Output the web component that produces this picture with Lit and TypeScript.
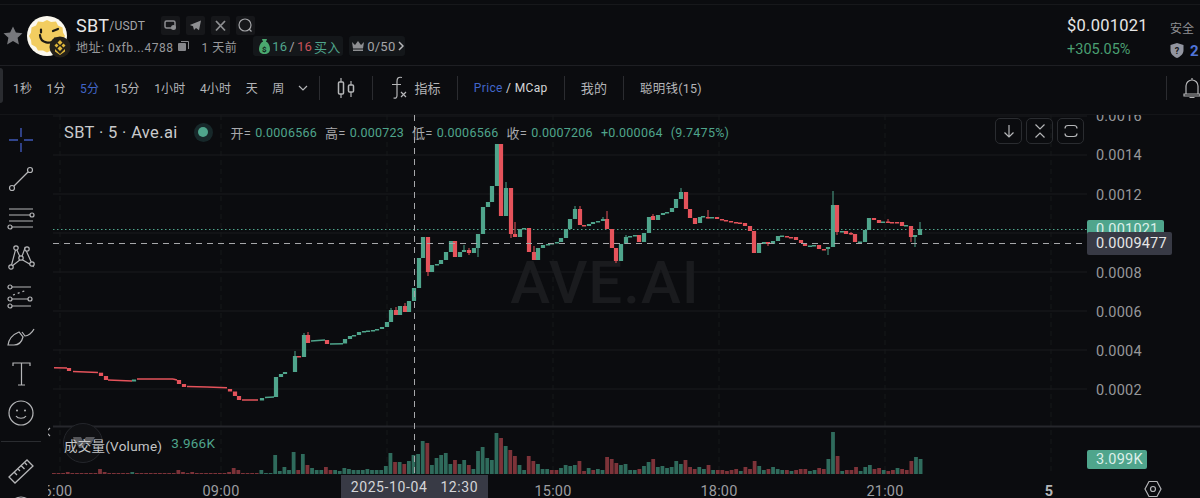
import { LitElement, html, css, svg } from "lit";
import { customElement } from "lit/decorators.js";

const G = "#4fa58c", R = "#e5535b", VG = "#2f6b5c", VR = "#7d3339";

// x, open-y, close-y, high-y?, low-y?
const candles: number[][] = [
  [69,368,371],[101,372.7,376],[106,376,380],[134,381.5,379.5],[179,380,384],[184,384,387],
  [230,389,391.5],[235,391.5,396],[239,396,400],[262,400.5,398],[276,397,377],[281,377,374],[285,374,372],
  [295,372,356,351],[299,356,357],[304,357,335,333],[308,335,343,332],[327,340,344],[345,343.5,339],[350,339,336],
  [354,336,335],[359,335,332],[364,332,331],[368,331,330.5],[373,330.5,330],[377,330,329],[382,329,327],[387,327,322],[391,322,310,308],[396,310,315,307],[400,315,306],[405,306,312,303],
  [409,312,301],[414,301,288],[419,288,258],[423,258,237],[428,237,272,237,276],[432,272,265],[437,265,264],[441,264,260],[446,260,252],[451,252,241],[455,241,257],[460,257,252],
  [464,252,250,245],[469,250,253,248,255],[474,253,248],[478,248,234,234,257],[483,234,207],[488,207,202],[492,202,186],[497,186,144],[501,144,216],[506,216,188,182],[511,188,234,188,238],
  [515,234,237,222],[520,237,229],[524,229,228],[529,228,252],[534,252,260,246],[538,260,248],[543,248,245],[548,245,244],[552,244,243],[557,243,242],[561,242,238],[566,238,229],[570,229,219],[575,219,209,206],[580,209,225,206],
  [584,225,226],[589,226,224],[593,224,222],[598,222,221],[603,221,219,217],[607,219,229,211],[612,229,248],[616,248,261,248,263],[621,261,244],[626,244,237,235],[630,237,236],[635,236,235],[639,235,242],[644,242,233],[649,233,217],[653,216,220,214],[658,220,215],
  [663,215,213],[667,213,212],[672,212,208],[676,208,199],[681,199,192,188],[686,192,209],[690,209,218],[695,218,224],[700,223,217],[703,217,216],[708,217,218,210],[712,217.5,217],[717,217,219],[722,219,220],[726,220,221],[731,221,222],[736,222,222.5],[740,222.5,223],[745,223,226],[750,226,231],[754,231,253],[759,253,244],
  [764,244,242],[768,242,244,242,246],[773,244,241],[778,241,236],[782,236,235.5],[787,236,237],[791,237,237.5],[796,237,240],[801,240,243],[805,243,246],[810,246,245.5],[814,245.5,245],[819,245,249],[824,249,249.5],[828,249,247,247,255],[833,247,205,191],[837,205,232,205,235],[842,232,231],[846,231,234],[851,233,234,232,235],[855,234,242],[860,242,241.5],[865,242,230],[869,230,218],[874,218,220],[879,220,223],[883,222,221.5],[888,221.5,222,219],[892,222,222.5],[897,222,222.2],[902,222,226],[906,226,225],[911,226,237,226,242],[915,237,235,235,247],[920,235,229,222],
];
// flat runs: x0,x1,y0,y1,color
const runs: [number, number, number, number, string][] = [
  [54,67,367.7,368,R],[73,98,371.5,372.5,R],[108,132,380,381,R],[137,173,379,379,R],[173,177,379,380,R],[187,207,386.5,387,R],
  [207,227,387,387.8,R],[242,258,400,400,R],[265,274,397.6,397,G],[311,325,341,340,G],[330,343,344,343.7,G],
];

const headVols: string[] = Array(48).fill("1r");
const setVols: [number, string][] = [[3,"2r"],[10,"5r"],[11,"2r"],[17,"2g"],[27,"4r"],[28,"2r"],[30,"2r"],[38,"2r"],[39,"6r"],[40,"4r"],[45,"4g"],[46,"1g"],[47,"1g"]];
setVols.forEach(([i, v]) => (headVols[i] = v));
const tailVols = `19g 3g 7g 4g 22g 4r 20g 9r 6g 4g 4g 7r 4r 4g 3g 6g 5g 4g 4g 4g 5g 4g 4g 4g 8g 21g 12r 12g 10r 13g 19g 20g 33g 31r 9g 16g 19g 21g 10g 14r 10g 14g 9r 5g 23g 27g 16g 14g 41g 36r 28g 24r 18r 9g 4g 18r 13r 10g 5g 5g 4r 4r 6g 9g 8g 9g 13r 3r 6g 4r 5g 4g 17r 15r 11r 9g 10g 4g 4g 5r 8g 12g 15r 7g 8g 6g 7g 13g 10g 14r 7r 5r 7g 5g 9r 4g 4r 4r 3r 4r 5r 3g 7r 5r 13r 8g 4g 5r 7g 5g 4g 4r 3g 4r 5r 5r 3g 4g 6r 5r 15g 42g 18r 3g 4r 4r 7r 3g 7g 9g 5r 6r 4g 3r 4r 6g 5r 4r 13r 17g 15g`.split(" ");
const vols: [number, string][] = [...headVols, ...tailVols].map((s) => [parseInt(s), s.endsWith("g") ? VG : VR] as [number, string]);

const prices: [string, number][] = [["0.0016",116],["0.0014",155],["0.0012",194.5],["0.0008",272.5],["0.0006",311.5],["0.0004",350.5],["0.0002",389.5]];
const grid = [116, 155, 194, 233, 272, 311, 350, 389];
const vgrid = [60, 221, 387, 553, 719, 885, 1051];
const times: [string, number][] = [["6:00",58],["09:00",221],["15:00",553],["18:00",719],["21:00",885]];

function chart() {
  return html`<svg class="plot" width="1152" height="383" viewBox="48 115 1152 383">
    ${grid.map((y) => svg`<line x1="53" x2="1087" y1=${y} y2=${y} stroke="#1a1b1e"/>`)}
    ${vgrid.map((x) => svg`<line x1=${x} x2=${x} y1="115" y2="475" stroke="#17181b" stroke-dasharray="5 4"/>`)}
    <text x="605" y="303" text-anchor="middle" class="wm">AVE.AI</text>
    <line x1="53" x2="1087" y1="229.5" y2="229.5" stroke="#4fa58c" stroke-dasharray="1.5 2.5"/>
    ${runs.map(([a, b, c, d, col]) => svg`<line x1=${a} x2=${b} y1=${c} y2=${d} stroke=${col} stroke-width="1.5"/>`)}
    ${candles.map(([x, o, c, hi, lo]) => {
      const col = c < o ? G : R;
      const top = Math.min(o, c), h = Math.max(Math.abs(o - c), 1.5);
      return svg`${hi !== undefined || lo !== undefined ? svg`<line x1=${x} x2=${x} y1=${hi ?? top} y2=${lo ?? top + h} stroke=${col}/>` : ""}<rect x=${x - 2.1} y=${top} width="4.2" height=${h} fill=${col}/>`;
    })}
    <line x1="53" x2="1087" y1="243.5" y2="243.5" stroke="#a6a7aa" stroke-dasharray="6 5"/>
    <line x1="53" x2="1200" y1="426.5" y2="426.5" stroke="#26272c" stroke-width="2"/>
    ${vols.map(([h, col], i) => svg`<rect x=${54 + i * 4.61 - 2} y=${474 - h} width="3.8" height=${h} fill=${col}/>`)}
    <line x1="414.5" x2="414.5" y1="115" y2="475" stroke="#a6a7aa" stroke-dasharray="6 5"/>
    <circle cx="83" cy="443" r="19.5" fill="#101114" stroke="#24262b"/>
    <path d="M73 437h8l2 4 3-4h9l-4 7h-6l-2 4h-4l-2-4h-2z" fill="#55565a"/>
    <text x="1096" y="120.5" class="ax">0.0016</text>
    ${prices.slice(1).map(([t, y]) => svg`<text x="1096" y=${y + 5} class="ax">${t}</text>`)}
    ${times.map(([t, x]) => svg`<text x=${x} y="496" text-anchor="middle" class="ax tm">${t}</text>`)}
    <text x="1049" y="496" text-anchor="middle" class="ax five">5</text>
    <g fill="none" stroke="#b5b6b8" stroke-width="1.2"><path d="M1149 481.500h8l4 7.500-4 7.500h-8l-4-7.500z"/><circle cx="1153" cy="489" r="2.500"/></g>
  </svg>`;
}

const ic = (w: number, h: number, body: unknown, cls = "") =>
  html`<svg class="ic ${cls}" width=${w} height=${h} viewBox="0 0 ${w} ${h}">${body}</svg>`;

@customElement("app-root")
export class AppRoot extends LitElement {
  static styles = css`
    :host { display: block; width: 1200px; height: 498px; overflow: hidden; background: #0b0c0f; color: #b5b6b8;
      font-family: "Roboto", "Noto Sans CJK SC", sans-serif; font-size: 12px; position: relative; }
    .ic { display: block; flex: none; fill: none; stroke: #b5b6b8; stroke-width: 1.2; }
    .solid { stroke: none; }
    .head { margin-top: 4px; height: 62px; box-sizing: border-box; border-top: 1px solid #17181b; border-bottom: 1px solid #1e1f23; display: flex; align-items: center; padding-left: 3px; }
    .star { margin-top: 2px; }
    .head-main { display: flex; flex-direction: column; gap: 1px; margin-left: 3px; padding-top: 1px; }
    .logo { margin-left: 4px; }
    .row1, .row2 { display: flex; align-items: center; white-space: nowrap; }
    .row1 { height: 20px; }
    .row2 { height: 20px; color: #98999c; letter-spacing: .5px; }
    .sym { font-size: 18px; color: #e6e6e6; letter-spacing: .3px; }
    .pair { font-size: 12px; color: #a4a5a8; letter-spacing: .2px; margin-top: 2px; }
    .links { display: flex; gap: 6px; margin-left: 16px; }
    .sq { width: 19px; height: 19px; background: #16171a; border-radius: 2px; display: flex; align-items: center; justify-content: center; }
    .copy { margin-left: 5px; }
    .age { margin-left: 12px; }
    .badge { height: 20px; background: #14171a; border-radius: 3px; display: flex; align-items: center; padding: 0 3px; gap: 2px; color: #a4a5a8; font-size: 13px; box-sizing: border-box; flex: none; letter-spacing: .25px; }
    .b1 { margin-left: 16px; width: 90px; padding-left: 6px; }
    .b2 { margin-left: 6px; width: 56px; padding-left: 2px; }
    .gr { color: #4fa58c; } .rd { color: #c9525a; }
    .head-right { margin-left: auto; display: flex; width: 133px; flex: none; padding-top: 2px; }
    .pr { width: 103px; display: flex; flex-direction: column; gap: 3px; }
    .pv { font-size: 16.5px; color: #e6e6e6; letter-spacing: .25px; line-height: 24px; }
    .pc { font-size: 14.5px; color: #4a9f72; line-height: 18px; }
    .safe { display: flex; flex-direction: column; gap: 7px; padding-top: 5px; color: #8f9093; overflow: hidden; }
    .safe-v { display: flex; align-items: center; gap: 6px; color: #4f74d8; font-size: 15px; font-weight: 700; line-height: 16px; }
    .bar { height: 49px; box-sizing: border-box; border-bottom: 1px solid #141518; display: flex; align-items: center; position: relative; padding-bottom: 5px; letter-spacing: .2px; color: #b4b5b8; }
    .grip { position: absolute; left: 0; top: 2px; width: 3px; height: 35px; background: #2a2c30; border-radius: 0 3px 3px 0; }
    .sep { width: 1px; height: 24px; background: #2b2c30; flex: none; }
    .tf { margin-left: 13px; display: flex; align-items: center; gap: 14.4px; }
    .on { color: #4166c9; }
    .mc { color: #d5d6d8; }
    .px { letter-spacing: .35px; }
    .lg { font-size: 13px; }
    .md { font-size: 12.5px; }
    .chev { margin-left: 14px; margin-right: 11px; }
    .m16 { margin: 0 16px; }
    .fx { margin: 0 5px 0 16px; }
    .bell { margin-left: auto; margin-right: -1px; display: flex; align-items: center; width: 34px; justify-content: flex-end; flex: none; }
    .bell .sep { margin-right: 16px; }
    .body { display: flex; height: 383px; }
    .tools { width: 48px; flex: none; display: flex; flex-direction: column; align-items: center; padding: 11px 6px 0 0; box-sizing: border-box; gap: 11px; }
    .tools .ic { width: 28px; height: 28px; }
    .tools .active { stroke: #3f58b8; stroke-width: 1.4; }
    .rule { width: 40px; height: 1px; background: #2a2c30; margin: 3px 0 4px; flex: none; }
    .chart { position: relative; flex: 1; overflow: hidden; }
    .plot { display: block; }
    .plot text { font-family: "Roboto", "Noto Sans CJK SC", sans-serif; }
    .ax { font-size: 14.5px; fill: #96979a; letter-spacing: .2px; }
    .tm { fill: #9c9da0; }
    .five { font-weight: 700; fill: #b5b6b8; }
    .wm { font-size: 60px; font-weight: 500; fill: #1a1b1e; letter-spacing: 1px; }
    .legend { position: absolute; left: 16px; top: 5px; height: 24px; display: flex; align-items: center; font-size: 12.5px; color: #a8a9ac; white-space: nowrap; letter-spacing: .25px; }
    .legend span.k { margin-right: 4px; font-size: 13px; }
    .title { font-size: 16.5px; color: #c9cacc; letter-spacing: .35px; margin-right: 16px; }
    .halo { width: 19px; height: 19px; border-radius: 50%; background: #17282a; display: flex; align-items: center; justify-content: center; margin-right: 18px; }
    .dot { width: 10px; height: 10px; border-radius: 50%; background: #4fa58c; }
    .legend b { font-weight: 400; color: #4fa58c; margin-right: 8px; }
    .btns { position: absolute; left: 947px; top: 3px; display: flex; gap: 4px; }
    .btn { width: 27px; height: 26px; box-sizing: border-box; border: 1px solid #2a2c30; border-radius: 5px; display: flex; align-items: center; justify-content: center; }
    .tag { position: absolute; box-sizing: border-box; color: #e6e6e6; font-size: 14.5px; border-radius: 2px; display: flex; align-items: center; padding-left: 9px; letter-spacing: .2px; }
    .t-price { left: 1039px; top: 105px; width: 77px; height: 18px; background: #4fa58c; color: #dcefe9; }
    .t-cross { left: 1039px; top: 117px; width: 85px; height: 23px; background: #383a45; }
    .t-vol { left: 1039px; top: 335px; width: 60px; height: 19px; background: #4fa58c; color: #dcefe9; }
    .t-time { left: 293px; top: 360px; width: 147px; height: 23px; background: #383a45; color: #d4d5d8; padding: 0; justify-content: center; gap: 13px; font-size: 14px; border-radius: 0; letter-spacing: .6px; }
    .vlab { position: absolute; left: 16px; top: 320px; display: flex; gap: 9px; font-size: 13.5px; color: #c4c5c8; letter-spacing: .25px; }
    .collapse { position: absolute; left: -3px; top: 312px; }
  `;

  render() {
    return html`
      <div class="head">
        <svg class="ic solid star" width="20" height="20" viewBox="0 0 20 20"><path fill="#77787c" d="M10 .5l2.900 6 6.600.8-4.900 4.500 1.300 6.600L10 15.100l-5.900 3.300 1.300-6.600L.5 7.300l6.600-.8z"/></svg>
        <svg class="ic solid logo" width="46" height="46" viewBox="0 -4 46 46">
          <circle cx="20" cy="20" r="20" fill="#fbf8ee"/>
          <path fill="#f2cd60" d="M20 4l4 2 5-.5 2 4 4.500 2 .5 5 2 3.500-2 4-.5 4.500-4.500 2.500-2 3.500-5 0-4 2-4-2-5 0-2-3.500-4.500-2.500-.5-4.500-2-4 2-3.500.5-5 4.500-2 2-4 5 .5z"/>
          <path d="M13 19a8 8 0 0 0 15 3.500" fill="none" stroke="#1c1a14" stroke-width="2.200" stroke-linecap="round"/>
          <path d="M14 13.500v3M26 15l5-2" fill="none" stroke="#1c1a14" stroke-width="2.200" stroke-linecap="round"/>
          <circle cx="33" cy="31" r="10.500" fill="#23201a"/>
          <path d="M33 24l2.500 2.500-2.500 2.500-2.500-2.500zM27.500 29.500l2-2 2 2-2 2zM38.500 29.500l-2-2-2 2 2 2zM33 30l2.500 2.500-2.500 2.500-2.500-2.500zM28 33l5 5 5-5v2.500l-5 3.500-5-3.500z" fill="#e2b93b"/>
        </svg>
        <div class="head-main">
          <div class="row1">
            <span class="sym">SBT</span><span class="pair">/USDT</span>
            <div class="links">
              <div class="sq">${ic(13, 13, svg`<rect x="1" y="2" width="10" height="7" rx="1.500" stroke="#8e8f92" stroke-width="1.500"/><circle cx="9.500" cy="8.500" r="2.500" fill="#8e8f92" stroke="none"/>`)}</div>
              <div class="sq">${ic(13, 13, svg`<path d="M12 1.500L.8 6l3.200 1.200 1 3.800 2-2 3 2.200z" fill="#8e8f92" stroke="none"/>`)}</div>
              <div class="sq">${ic(13, 13, svg`<path d="M2 2l9 9.500M11 2L2 11.500" stroke="#8e8f92" stroke-width="1.800"/>`)}</div>
              <div class="sq">${ic(15, 15, svg`<circle cx="7" cy="7" r="6" stroke="#a4a5a8"/><path d="M11 11l2.500 2.500" stroke="#a4a5a8"/>`)}</div>
            </div>
          </div>
          <div class="row2">
            <span>地址: 0xfb...4788</span>
            <svg class="ic solid copy" width="11" height="11" viewBox="0 0 11 11"><rect x="0" y="2" width="8" height="8" rx="1" fill="#85868a"/><path d="M3 0h7a1 1 0 0 1 1 1v7h-1V1H3z" fill="#85868a"/></svg>
            <span class="age">1 天前</span>
            <div class="badge b1">
              <svg class="ic solid" width="11" height="15" viewBox="0 0 11 15"><path d="M3 0h5L7 3h1c2 2 3 4.500 3 7 0 3-2 5-5.500 5S0 13 0 10c0-2.500 1-5 3-7h1z" fill="#4aa86f"/><text x="5.500" y="12.500" text-anchor="middle" font-size="8" font-weight="700" fill="#0d2018">$</text></svg>
              <span class="gr">16</span><span>/</span><span class="rd">16</span><span class="gr">买入</span>
            </div>
            <div class="badge b2">
              <svg class="ic solid" width="14" height="12" viewBox="0 0 14 12"><path d="M1 2l3 3 3-4 3 4 3-3-1 6.500H2zM2 9.500h10V11H2z" fill="#8e8f92"/></svg>
              <span>0/50</span>
              <svg class="ic" width="6" height="10" viewBox="0 0 6 10"><path d="M1 1l4 4-4 4" stroke-width="1.500"/></svg>
            </div>
          </div>
        </div>
        <div class="head-right">
          <div class="pr"><span class="pv">$0.001021</span><span class="pc">+305.05%</span></div>
          <div class="safe"><span>安全</span><div class="safe-v">
            <svg class="ic solid" width="14" height="15" viewBox="0 0 14 15"><path d="M7 0l6.500 2v5c0 4-3 6.500-6.500 8C3.500 13.500.5 11 .5 7V2z" fill="#9295a0"/><text x="7" y="10.500" text-anchor="middle" font-size="9" font-weight="700" fill="#15161a">?</text></svg><span>2</span></div></div>
        </div>
      </div>

      <div class="bar">
        <div class="grip"></div>
        <div class="tf">
          <span>1秒</span><span>1分</span><span class="on">5分</span><span>15分</span><span>1小时</span><span>4小时</span><span>天</span><span>周</span>
        </div>
        ${ic(10, 6, svg`<path d="M1 1l4 4 4-4"/>`, "chev")}
        <div class="sep"></div>
        ${ic(20, 22, svg`<path d="M5 1v20M15 4v16"/><rect x="2.500" y="5" width="5" height="12" rx="1" fill="#0b0c0f" stroke-width="1.500"/><rect x="12.500" y="8" width="5" height="7" rx="1" fill="#0b0c0f" stroke-width="1.500"/>`, "m16")}
        <div class="sep"></div>
        ${ic(20, 24, svg`<path d="M13 1.500c-4-1-5 1-5 4v14c0 2-1 3-3.500 2.500M3 8.500h9"/><path d="M12 16l5 5M17 16l-5 5"/>`, "fx")}
        <span class="lg">指标</span>
        <div class="sep m16"></div>
        <span class="on px">Price</span><span class="mc px">&nbsp;/&nbsp;MCap</span>
        <div class="sep m16"></div>
        <span class="lg">我的</span>
        <div class="sep m16"></div>
        <span class="md">聪明钱(15)</span>
        <div class="bell"><div class="sep"></div>
          ${ic(18, 22, svg`<path d="M1 17h16v2H1zM3 17V9a6 6 0 0 1 12 0v8M9 1v2M6.500 20.500h5"/>`)}
        </div>
      </div>

      <div class="body">
        <div class="tools">
          <svg class="ic active" viewBox="0 0 28 28"><path d="M14 2v9M14 17v9M2 14h9M17 14h9"/></svg>
          <svg class="ic" viewBox="0 0 28 28"><circle cx="5" cy="23" r="2.500"/><circle cx="23" cy="5" r="2.500"/><path d="M7 21L21 7"/></svg>
          <svg class="ic" viewBox="0 0 28 28"><path d="M2 5h24M2 11h22M2 17h24M5 23h21"/><circle cx="25" cy="11" r="2" fill="#0b0c0f"/><circle cx="3" cy="23" r="2" fill="#0b0c0f"/></svg>
          <svg class="ic" viewBox="0 0 28 28"><path d="M4 24l5-19 5 11 4-11 8 18-12-7z"/><circle cx="4" cy="24" r="2.200" fill="#0b0c0f"/><circle cx="9" cy="5" r="2.200" fill="#0b0c0f"/><circle cx="14" cy="15" r="2.200" fill="#0b0c0f"/><circle cx="20" cy="6" r="2.200" fill="#0b0c0f"/><circle cx="25" cy="21" r="2.200" fill="#0b0c0f"/></svg>
          <svg class="ic" viewBox="0 0 28 28"><path d="M5 5h19M5 17h19M5 24h19"/><path d="M6 13l14-5" stroke-dasharray="2 3"/><circle cx="3" cy="5" r="2" fill="#0b0c0f"/><circle cx="3" cy="17" r="2" fill="#0b0c0f"/><circle cx="3" cy="24" r="2" fill="#0b0c0f"/><circle cx="23" cy="17" r="2" fill="#0b0c0f"/></svg>
          <svg class="ic" viewBox="0 0 28 28"><path d="M1 24c1-7 6-11 11-13l4 5c-1 4-3 8-9 8zM15 11l3 4c3 0 7-3 9-7"/></svg>
          <svg class="ic" viewBox="0 0 28 28"><path d="M6 6V3h17v3M14.500 3v22M11 25h7"/></svg>
          <svg class="ic" viewBox="0 0 28 28"><circle cx="14" cy="14" r="12"/><circle cx="10" cy="11.500" r="1" fill="#b5b6b8" stroke="none"/><circle cx="18" cy="11.500" r="1" fill="#b5b6b8" stroke="none"/><path d="M9 17c2 3 8 3 10 0"/></svg>
          <div class="rule"></div>
          <svg class="ic" viewBox="0 0 28 28"><path d="M2 20L20 3l6 6L8 26zM7 15l3 3M11 12l2 2M14.500 9l3 3M18 6l2 2" stroke-width="1.300"/></svg>
          <svg class="ic" viewBox="0 0 28 28"><circle cx="14" cy="12" r="11"/></svg>
        </div>
        <div class="chart">
          ${chart()}
          <svg class="ic collapse" width="6" height="10" viewBox="0 0 6 10"><path d="M5 1L1 5l4 4"/></svg>
          <div class="legend">
            <span class="title">SBT · 5 · Ave.ai</span>
            <div class="halo"><div class="dot"></div></div>
            <span class="k">开=</span><b>0.0006566</b><span class="k">高=</span><b>0.000723</b>
            <span class="k">低=</span><b>0.0006566</b><span class="k">收=</span><b>0.0007206</b>
            <b>+0.000064</b><b>(9.7475%)</b>
          </div>
          <div class="btns">
            <div class="btn">${ic(12, 14, svg`<path d="M6 1v12M1.500 8.500L6 13l4.500-4.500"/>`)}</div>
            <div class="btn">${ic(12, 16, svg`<path d="M1.500 1.500L6 6l4.500-4.500M1.500 14.500L6 10l4.500 4.500"/>`)}</div>
            <div class="btn">${ic(14, 14, svg`<path d="M1 4.500c0-2 1-3 3-3h6c2 0 3 1 3 3M1 9.500c0 2 1 3 3 3h6c2 0 3-1 3-3"/>`)}</div>
          </div>
          <div class="tag t-price">0.001021</div>
          <div class="tag t-cross">0.0009477</div>
          <div class="tag t-vol">3.099K</div>
          <div class="tag t-time"><span>2025-10-04</span><span>12:30</span></div>
          <div class="vlab"><span>成交量(Volume)</span><span class="gr">3.966K</span></div>
        </div>
      </div>
    `;
  }
}
